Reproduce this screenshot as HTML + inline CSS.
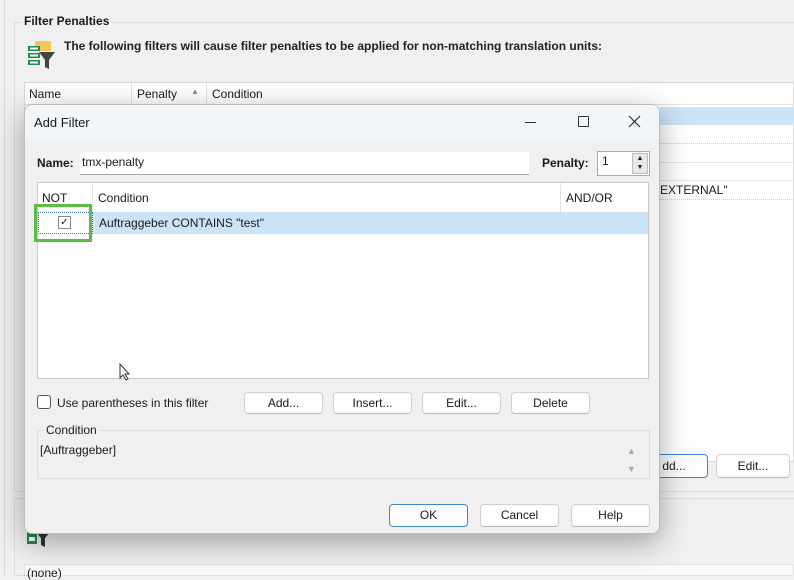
<!DOCTYPE html>
<html><head><style>
*{box-sizing:border-box;margin:0;padding:0}
body{width:794px;height:576px;overflow:hidden;background:#f0f0f0;font-family:"Liberation Sans",sans-serif;font-size:12px;color:#1a1a1a;position:relative}
.a{position:absolute}
.btn{position:absolute;background:#fdfdfd;border:1px solid #d0d0d0;border-bottom-color:#b8b8b8;border-radius:4px;text-align:center;line-height:20px;font-size:12px}
</style></head><body>
<div class="a" style="left:4px;top:0;width:1px;height:576px;background:#d8d8d8"></div>
<div class="a" style="left:14px;top:22px;width:780px;height:470px;border:1px solid #dcdcdc;border-right:none"></div>
<div class="a" style="left:22px;top:14px;background:#f0f0f0;padding:0 2px;font-weight:bold;font-size:12px">Filter Penalties</div>
<svg class="a" style="left:26px;top:40px" width="32" height="32" viewBox="0 0 32 32">
<rect x="9" y="1" width="16" height="10" rx="1" fill="#f3c65a"/>
<rect x="2" y="6" width="12" height="5" fill="#1e8c4a"/><rect x="4" y="7.5" width="8" height="2" fill="#fff"/>
<rect x="2" y="13" width="12" height="5" fill="#1e8c4a"/><rect x="4" y="14.5" width="8" height="2" fill="#fff"/>
<rect x="2" y="20" width="12" height="5" fill="#1e8c4a"/><rect x="4" y="21.5" width="8" height="2" fill="#fff"/>
<path d="M13 12h16l-6 8v9l-4-2v-7z" fill="#444"/></svg>
<div class="a" style="left:64px;top:39px;font-size:12px;font-weight:bold;color:#222">The following filters will cause filter penalties to be applied for non-matching translation units:</div>
<div class="a" style="left:24px;top:82px;width:770px;height:380px;background:#fff;border:1px solid #d8d8d8"></div>
<div class="a" style="left:25px;top:83px;width:769px;height:22px;border-bottom:1px solid #e5e5e5"></div>
<div class="a" style="left:131px;top:83px;width:1px;height:21px;background:#e0e0e0"></div>
<div class="a" style="left:206px;top:83px;width:1px;height:21px;background:#e0e0e0"></div>
<div class="a" style="left:29px;top:87px">Name</div>
<div class="a" style="left:137px;top:87px">Penalty</div>
<div class="a" style="left:191px;top:87px;font-size:8px;color:#888">▲</div>
<div class="a" style="left:212px;top:87px">Condition</div>
<div class="a" style="left:660px;top:107px;width:134px;height:18px;background:#cce4f7"></div>
<div class="a" style="left:660px;top:143px;width:134px;border-top:1px dotted #ccd"></div>
<div class="a" style="left:660px;top:162px;width:134px;border-top:1px dotted #ccd"></div>
<div class="a" style="left:660px;top:180px;width:134px;border-top:1px dotted #ccd"></div>
<div class="a" style="left:660px;top:199px;width:134px;border-top:1px dotted #ccd"></div>
<div class="a" style="left:660px;top:183px">EXTERNAL"</div>
<div class="btn" style="left:640px;top:454px;width:68px;height:24px;line-height:22px;border-color:#3a87d0">dd...</div>
<div class="btn" style="left:716px;top:454px;width:74px;height:24px;line-height:22px">Edit...</div>
<div class="a" style="left:14px;top:498px;width:780px;height:78px;border:1px solid #dcdcdc;border-right:none"></div>
<div class="a" style="left:24px;top:564px;width:770px;height:12px;background:#fafafa;border:1px solid #e0e0e0"></div>
<div class="a" style="left:27px;top:566px">(none)</div>
<svg class="a" style="left:26px;top:526px" width="28" height="22"><rect x="1" y="6" width="10" height="12" fill="#1e8c4a"/><rect x="3" y="11" width="6" height="4" fill="#fff"/><path d="M10 6h14l-5 6v9l-4-2v-7z" fill="#333"/></svg>
<!-- shadow -->
<div class="a" style="left:24px;top:104px;width:636px;height:430px;border-radius:8px;box-shadow:0 8px 30px rgba(0,0,0,.35)"></div>
<div class="a" style="left:24px;top:104px;width:636px;height:430px;border-radius:8px;background:#f0f0f0;border:1px solid #bdbdbd;overflow:hidden">
 <div class="a" style="left:0;top:0;width:636px;height:34px;background:#f3f6f9"></div>
 <div class="a" style="left:9px;top:10px;font-size:13px">Add Filter</div>
 <div class="a" style="left:500px;top:17px;width:11px;height:1px;background:#333"></div>
 <div class="a" style="left:553px;top:11px;width:11px;height:11px;border:1px solid #333;border-radius:1px"></div>
 <svg class="a" style="left:603px;top:10px" width="13" height="13"><path d="M1 1L12 12M12 1L1 12" stroke="#333" stroke-width="1.2"/></svg>
 <div class="a" style="left:12px;top:51px;font-weight:bold">Name:</div>
 <div class="a" style="left:55px;top:47px;width:449px;height:23px;background:#fff;border-bottom:1px solid #aaa;padding:3px 2px">tmx-penalty</div>
 <div class="a" style="left:517px;top:51px;font-weight:bold">Penalty:</div>
 <div class="a" style="left:572px;top:46px;width:53px;height:25px;background:#fff;border:1px solid #aaa;padding:2px 4px">1</div>
 <div class="a" style="left:607px;top:48px;width:16px;height:21px;background:#e8e8e8;border:1px solid #bbb;font-size:7px;line-height:9px;text-align:center">▲<br>▼</div>
 <div class="a" style="left:12px;top:77px;width:612px;height:197px;background:#fff;border:1px solid #c8c8c8"></div>
 <div class="a" style="left:67px;top:78px;width:1px;height:51px;background:#e4e4e4"></div>
 <div class="a" style="left:535px;top:78px;width:1px;height:51px;background:#e4e4e4"></div>
 <div class="a" style="left:17px;top:86px">NOT</div>
 <div class="a" style="left:73px;top:86px">Condition</div>
 <div class="a" style="left:541px;top:86px">AND/OR</div>
 <div class="a" style="left:13px;top:107px;width:610px;height:22px;background:#cce4f7"></div>
 <div class="a" style="left:13px;top:107px;width:55px;height:22px;background:#fff;border:1px dotted #3a6ea5"></div>
 <div class="a" style="left:33px;top:111px;width:13px;height:13px;border:1px solid #888;background:#fff;font-size:10px;line-height:11px;text-align:center">✓</div>
 <div class="a" style="left:74px;top:111px">Auftraggeber CONTAINS "test"</div>
 <div class="a" style="left:9px;top:99px;width:58px;height:38px;border:3px solid #5dbb46"></div>
 <svg class="a" style="left:94px;top:258px" width="12" height="18"><path d="M1 1v14l3-3 3 5 2-1-3-5h4z" fill="#fff" stroke="#333" stroke-width="1"/></svg>
 <div class="a" style="left:12px;top:290px;width:14px;height:14px;border:1px solid #555;border-radius:3px;background:#fff"></div>
 <div class="a" style="left:32px;top:291px">Use parentheses in this filter</div>
 <div class="btn" style="left:219px;top:287px;width:79px;height:22px">Add...</div>
 <div class="btn" style="left:308px;top:287px;width:79px;height:22px">Insert...</div>
 <div class="btn" style="left:397px;top:287px;width:79px;height:22px">Edit...</div>
 <div class="btn" style="left:486px;top:287px;width:79px;height:22px">Delete</div>
 <div class="a" style="left:12px;top:325px;width:613px;height:49px;border:1px solid #dcdcdc"></div>
 <div class="a" style="left:18px;top:318px;background:#f0f0f0;padding:0 3px">Condition</div>
 <div class="a" style="left:15px;top:338px">[Auftraggeber]</div>
 <div class="a" style="left:602px;top:337px;font-size:9px;color:#aaa;line-height:18px">▲<br>▼</div>
 <div class="btn" style="left:364px;top:399px;width:79px;height:23px;border:1px solid #3a87d0">OK</div>
 <div class="btn" style="left:455px;top:399px;width:79px;height:23px">Cancel</div>
 <div class="btn" style="left:546px;top:399px;width:79px;height:23px">Help</div>
</div>
</body></html>
